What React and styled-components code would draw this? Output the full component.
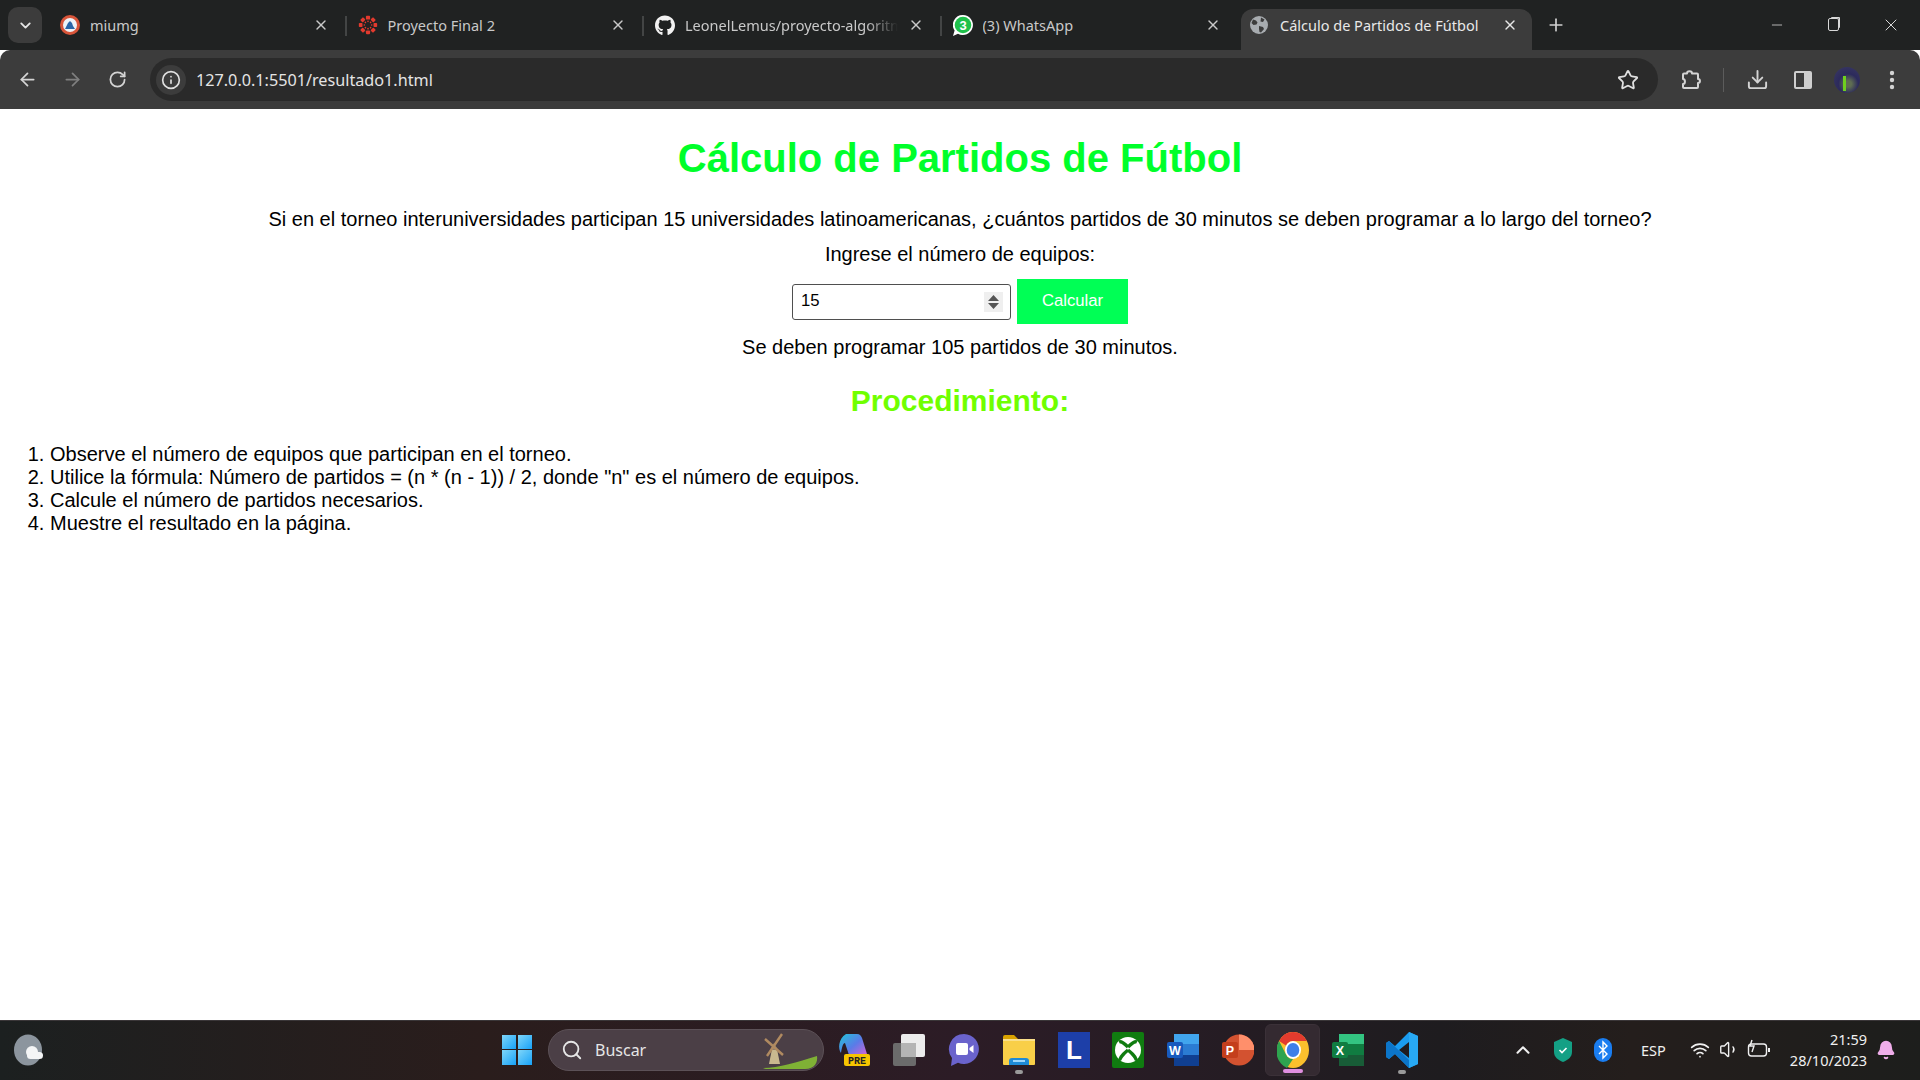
import React from 'react';
import styled, { createGlobalStyle } from 'styled-components';
import { FaGithub } from 'react-icons/fa';
import {
  ArrowLeft, ArrowRight, RotateCw, Info, Star, Download, X, Plus, Minus, ChevronDown, ChevronUp,
  Search, Wifi, Volume1, Bell,
} from 'lucide-react';

const GlobalStyle = createGlobalStyle`
  html, body { margin: 0; padding: 0; height: 100%; background: #fff; }
  * { box-sizing: border-box; }
`;

const Screen = styled.div`
  width: 1920px;
  height: 1080px;
  display: flex;
  flex-direction: column;
  overflow: hidden;
  font-family: "Liberation Sans", Arial, sans-serif;
`;

/* browser chrome */
const TabStrip = styled.div`
  height: 50px;
  flex: none;
  background: #202222;
  display: flex;
  align-items: flex-end;
  padding-left: 8px;
`;

const TabSearch = styled.div`
  width: 34px;
  height: 36px;
  margin: 0 8px 7px 0;
  border-radius: 10px;
  background: #3c3c3c;
  color: #e6e6e6;
  display: flex;
  align-items: center;
  justify-content: center;
`;

const Tab = styled.div`
  width: ${p => (p.$active ? 291 : 297.5)}px;
  height: 41px;
  padding: ${p => (p.$active ? '0 14px 9px 8px' : '0 19px 9px 10px')};
  margin-left: ${p => (p.$active ? '1px' : '0')};
  display: flex;
  align-items: center;
  gap: ${p => (p.$active ? 11 : 10)}px;
  position: relative;
  background: ${p => (p.$active ? '#3c3c3c' : 'transparent')};
  border-radius: ${p => (p.$active ? '12px 12px 0 0' : '0')};
  color: ${p => (p.$active ? '#e8e8e8' : '#c9c9c9')};
  font: 14.5px "Noto Sans", "Open Sans", sans-serif;
  & + &::before {
    content: '';
    display: ${p => (p.$noSep ? 'none' : 'block')};
    position: absolute;
    left: -3px;
    top: 7px;
    width: 2px;
    height: 20px;
    background: #434545;
  }
`;

const TabTitle = styled.span`
  flex: 1;
  min-width: 0;
  white-space: nowrap;
  overflow: hidden;
  ${p => p.$fade && `
    -webkit-mask-image: linear-gradient(90deg, #000 85%, transparent);
    mask-image: linear-gradient(90deg, #000 85%, transparent);
  `}
`;

const TabFavicon = styled.span`
  width: 20px;
  height: 20px;
  flex: none;
  display: flex;
  align-items: center;
  justify-content: center;
`;

const NewTab = styled.div`
  width: 30px;
  height: 30px;
  margin: 0 0 10px 9px;
  color: #d0d0d0;
  display: flex;
  align-items: center;
  justify-content: center;
`;

const WindowButtons = styled.div`
  margin-left: auto;
  height: 100%;
  display: flex;
  align-items: center;
  color: #d8d8d8;
  padding: 0 1px 1px 0;
`;

const WindowButton = styled.div`
  width: 57px;
  height: 100%;
  display: flex;
  align-items: center;
  justify-content: center;
`;

const RestoreGlyph = styled.span`
  width: 11px;
  height: 13px;
  border: 1.3px solid #d8d8d8;
  border-radius: 2px;
  box-shadow: 2px -2px 0 -1px #d8d8d8;
`;

const Toolbar = styled.div`
  height: 59px;
  flex: none;
  background: #3c3c3c;
  border-radius: 10px 10px 0 0;
  display: flex;
  align-items: center;
  padding: 0 6px 0 5px;
  color: #cfcfcf;
`;

const NavButton = styled.div`
  width: 45px;
  height: 38px;
  flex: none;
  display: flex;
  align-items: center;
  justify-content: center;
  color: ${p => (p.$dim ? '#7f7f7f' : '#d4d4d4')};
`;

const Omnibox = styled.div`
  flex: 1;
  height: 43px;
  margin: 0 9px 0 10px;
  padding: 0 19px 0 6px;
  border-radius: 22px;
  background: #2a2a2a;
  display: flex;
  align-items: center;
  color: #e4e4e4;
  font: 16.2px "Noto Sans", "Open Sans", sans-serif;
`;

const SiteInfo = styled.span`
  width: 30px;
  height: 30px;
  margin-right: 10px;
  border-radius: 50%;
  background: #3c3c3c;
  display: flex;
  align-items: center;
  justify-content: center;
  color: #e0e0e0;
`;

const Url = styled.span`
  flex: 1;
`;

const ToolSeparator = styled.span`
  width: 1px;
  height: 24px;
  margin: 0 11px 0 11px;
  background: #5c5c5c;
`;

const ProfileAvatar = styled.span`
  width: 26px;
  height: 26px;
  margin: 0 9px;
  border-radius: 50%;
  background: radial-gradient(circle at 55% 65%, #5f6d52 0 14%, #2c2a5c 45%, #3b3a63 100%);
  position: relative;
  overflow: hidden;
  &::after {
    content: '';
    position: absolute;
    left: 9px;
    top: 9px;
    width: 3px;
    height: 15px;
    background: #6fd01e;
  }
`;

/* page */
const Page = styled.main`
  flex: 1;
  background: #fff;
  color: #000;
  font-size: 20px;
  line-height: 23px;
  padding: 0 10px;
  text-align: center;
`;

const Title = styled.h1`
  margin: 26px 0 27px;
  font-size: 40px;
  line-height: 46px;
  font-weight: 700;
  color: #00ff2a;
`;

const Question = styled.p`
  margin: 0;
`;

const FieldLabel = styled.p`
  margin: 12px 0 0;
`;

const FormRow = styled.form`
  margin-top: 13px;
  display: flex;
  justify-content: center;
  align-items: center;
  gap: 6px;
`;

const NumberBox = styled.div`
  width: 219px;
  height: 36px;
  border: 1px solid #4f4f4f;
  border-radius: 3px;
  background: #fff;
  display: flex;
  align-items: center;
  padding: 0 7px 0 8px;
`;

const NumberInput = styled.input`
  flex: 1;
  min-width: 0;
  border: 0;
  outline: 0;
  padding: 0 0 2px;
  background: transparent;
  font: 16.7px "Liberation Sans", Arial, sans-serif;
  color: #000;
`;

const Spinner = styled.span`
  width: 19px;
  height: 20px;
  background: #efefef;
  display: flex;
  align-items: center;
  justify-content: center;
`;

const SubmitButton = styled.button`
  width: 111px;
  height: 45px;
  border: 0;
  padding: 0 0 2px;
  background: #00ff55;
  color: #fff;
  font: 16.7px "Liberation Sans", Arial, sans-serif;
`;

const Result = styled.p`
  margin: 12px 0 0;
`;

const SectionTitle = styled.h2`
  margin: 25px 0 25px;
  font-size: 30px;
  line-height: 34px;
  font-weight: 700;
  color: #70ff00;
`;

const Steps = styled.ol`
  margin: 0;
  padding: 0 0 0 40px;
  text-align: left;
`;

/* taskbar */
const Taskbar = styled.footer`
  height: 60px;
  flex: none;
  position: relative;
  border-top: 1px solid #3a3638;
  padding-bottom: 2px;
  background: linear-gradient(90deg, #1c2020 0%, #2a1d1c 25%, #2c1c26 50%, #261c24 62%, #1e1c1f 75%, #241e1c 85%, #1d1e1c 100%);
  display: grid;
  grid-template-columns: 502px auto 1fr;
  align-items: center;
`;

const WeatherSlot = styled.div`
  padding-left: 14px;
  display: flex;
  align-items: center;
`;

const CenterIcons = styled.div`
  display: flex;
  align-items: center;
  height: 100%;
`;

const WindowsLogo = styled.div`
  width: 30px;
  height: 30px;
  margin-right: 16px;
  display: grid;
  grid-template-columns: 1fr 1fr;
  gap: 1.5px;
`;

const WindowsPane = styled.span`
  background: linear-gradient(135deg, #7fd6f9, #17a2f8);
`;

const SearchPill = styled.div`
  width: 276px;
  height: 42px;
  margin-right: 3px;
  padding: 0 4px 0 12px;
  border-radius: 21px;
  background: #4b3f46;
  border: 1px solid #5c5157;
  display: flex;
  align-items: center;
  gap: 12px;
  color: #e6e6e6;
  font: 16px "Noto Sans", "Open Sans", sans-serif;
`;

const SearchLabel = styled.span`
  flex: 1;
`;

const TaskSlot = styled.div`
  width: 54.8px;
  height: 52px;
  position: relative;
  display: flex;
  align-items: center;
  justify-content: center;
  border-radius: 6px;
  background: ${p => (p.$active ? '#342a31' : 'transparent')};
  border: ${p => (p.$active ? '1px solid #3b3138' : '0')};
  &::after {
    content: '';
    display: ${p => (p.$dot ? 'block' : 'none')};
    position: absolute;
    bottom: 2px;
    left: 50%;
    transform: translateX(-50%);
    width: ${p => (p.$dot === 'wide' ? 20 : 8)}px;
    height: 4px;
    border-radius: 2px;
    background: ${p => (p.$dot === 'wide' ? '#e08fe0' : '#9a9a9a')};
  }
`;

const Tray = styled.div`
  justify-self: end;
  display: flex;
  align-items: center;
  height: 100%;
  color: #f0f0f0;
  padding-right: 24px;
`;

const TrayItem = styled.span`
  display: flex;
  align-items: center;
  justify-content: center;
  width: ${p => p.$w || 40}px;
  color: ${p => p.$color || 'inherit'};
  font: 14.5px "Noto Sans", "Open Sans", sans-serif;
`;

const Clock = styled.div`
  margin-left: 16px;
  text-align: right;
  font: 14.5px/21px "Noto Sans", "Open Sans", sans-serif;
  color: #f0f0f0;
`;

const BellSlot = styled.span`
  margin-left: 9px;
  display: flex;
  color: #f0aeea;
`;

const CanvasIcon = () => (
  <svg width="22" height="22" viewBox="0 0 24 24">
    <g fill="#e23a2e">
      {[0, 45, 90, 135, 180, 225, 270, 315].map(a => (
        <g key={a} transform={`rotate(${a} 12 12)`}>
          <rect x="9.5" y="1" width="5" height="4.4" rx="1" />
          <circle cx="12" cy="7.6" r="1" />
        </g>
      ))}
    </g>
  </svg>
);

const UmgIcon = () => (
  <svg width="20" height="20" viewBox="0 0 20 20">
    <circle cx="10" cy="10" r="10" fill="#d8553a" />
    <circle cx="10" cy="10" r="7" fill="#eef3f8" />
    <path d="M5 14l3-6 2-2 2 2 1 3 2 3z" fill="#2a66a8" />
  </svg>
);

const GlobeFilled = () => (
  <svg width="18" height="18" viewBox="0 0 18 18">
    <circle cx="9" cy="9" r="9" fill="#a8acb0" />
    <path d="M3 3.5l3 1 1.5 2-1 2L3.5 9 1.5 7zM11 1.5l3.5 2-1.5 2.5-2.5-.5zM9 10l4 1 1 2-3 3.5-1.5-.5-.5-3z" fill="#3c3c3c" />
  </svg>
);

const WhatsappBadge = () => (
  <svg width="20" height="21" viewBox="0 0 20 21">
    <path d="M10 0a10 10 0 1 1-5 18.7L0 21l1.6-5.4A10 10 0 0 1 10 0z" fill="#fff" />
    <circle cx="10" cy="10" r="8.3" fill="#1fc14b" />
    <text x="10" y="14.5" textAnchor="middle" fontSize="13" fontWeight="700" fontFamily="Liberation Sans" fill="#fff">3</text>
  </svg>
);

const PuzzleIcon = () => (
  <svg width="24" height="24" viewBox="0 0 24 24" fill="none" stroke="currentColor" strokeWidth="2" strokeLinejoin="round">
    <path d="M9 5.5c0-3 5-3 5 0h5a1 1 0 0 1 1 1V11c2.6 0 2.6 4 0 4v4a1 1 0 0 1-1 1H6a1 1 0 0 1-1-1v-3c2.6 0 2.6-5 0-5V6.5a1 1 0 0 1 1-1z" />
  </svg>
);

const SidePanelIcon = () => (
  <svg width="22" height="22" viewBox="0 0 22 22">
    <rect x="2" y="2" width="18" height="18" rx="2" fill="#cfcfcf" />
    <rect x="4" y="4" width="8" height="14" fill="#3c3c3c" />
  </svg>
);

const WeatherIcon = () => (
  <svg width="30" height="32" viewBox="0 0 30 32">
    <ellipse cx="14" cy="16" rx="14" ry="15.5" fill="#8c959e" />
    <circle cx="18" cy="18" r="6" fill="#f4f5f6" />
    <rect x="13" y="18" width="16" height="7" rx="3.5" fill="#f4f5f6" />
  </svg>
);

const WindmillIcon = () => (
  <svg width="64" height="40" viewBox="0 0 64 40">
    <path d="M8 38c16 0 34-6 54-12 1 6-2 13-12 13H16c-4 0-7 0-8-1z" fill="#7fb135" />
    <g transform="translate(-8 0)">
      <path d="M22 34l3-15h5l3 15z" fill="#c9b98f" />
      <path d="M23 20l4-7 4 7z" fill="#8a7d70" />
      <path d="M18 9l18 16M35 4L20 26" stroke="#b08a60" strokeWidth="2.4" />
    </g>
  </svg>
);

const CopilotIcon = () => (
  <svg width="32" height="34" viewBox="0 0 32 34">
    <defs>
      <linearGradient id="cop" x1="0" y1="0" x2="1" y2="1">
        <stop offset="0" stopColor="#21c4d8" />
        <stop offset=".5" stopColor="#5a7be8" />
        <stop offset="1" stopColor="#e660d0" />
      </linearGradient>
    </defs>
    <path d="M8 1h11c3 0 4 2 5 4l5 16c1 3-1 4-4 4H12L7 10c-2 0-3 4-4 10C0 16 0 6 8 1z" fill="url(#cop)" />
    <rect x="6" y="21" width="26" height="12" rx="2" fill="#f7c500" />
    <text x="19" y="31" textAnchor="middle" fontSize="10" fontWeight="700" fontFamily="Liberation Mono" fill="#222">PRE</text>
  </svg>
);

const TaskViewIcon = () => (
  <svg width="32" height="32" viewBox="0 0 32 32">
    <rect x="0" y="9" width="23" height="23" rx="2" fill="#6b6b6b" />
    <rect x="8" y="0" width="24" height="23" rx="2" fill="#ececec" />
    <rect x="8" y="9" width="15" height="14" fill="#b4b4b4" />
  </svg>
);

const MeetIcon = () => (
  <svg width="32" height="34" viewBox="0 0 32 34">
    <path d="M16 1a15 15 0 1 1-6 28.8L3 33l1-8A15 15 0 0 1 16 1z" fill="#6a63cc" />
    <rect x="8" y="10" width="12" height="12" rx="2" fill="#fff" />
    <path d="M21.5 15l4-3v8l-4-3z" fill="#fff" />
  </svg>
);

const FolderIcon = () => (
  <svg width="32" height="32" viewBox="0 0 32 32">
    <path d="M0 3a2 2 0 0 1 2-2h9l4 4h-15z" fill="#d9a200" />
    <rect x="0" y="5" width="32" height="26" rx="1" fill="#f9cf48" />
    <rect x="0" y="5" width="32" height="2" fill="#fbe08a" />
    <path d="M6 31v-4a3 3 0 0 1 3-3h14a3 3 0 0 1 3 3v4z" fill="#1e8ad6" />
    <rect x="10" y="26" width="12" height="2" fill="#9bd5fa" />
  </svg>
);

const LetterTile = () => (
  <svg width="32" height="36" viewBox="0 0 32 36">
    <rect width="32" height="36" fill="#1d3fa8" />
    <text x="16" y="27" textAnchor="middle" fontSize="26" fontWeight="700" fontFamily="Liberation Sans" fill="#fff">L</text>
  </svg>
);

const XboxIcon = () => (
  <svg width="32" height="36" viewBox="0 0 32 36">
    <rect width="32" height="36" rx="2" fill="#107c10" />
    <circle cx="16" cy="18" r="13" fill="#fff" />
    <path d="M16 15c-4-4-7-6-9-5M16 15c4-4 7-6 9-5M16 18c-5 4-9 9-8 11M16 18c5 4 9 9 8 11" stroke="#107c10" strokeWidth="3.4" fill="none" />
  </svg>
);

const OfficeTile = ({ letter, dark, mid, light, badge }) => (
  <svg width="32" height="34" viewBox="0 0 32 34">
    <rect x="7" y="1" width="25" height="32" rx="2" fill={mid} />
    <rect x="7" y="1" width="25" height="10" fill={light} />
    <rect x="7" y="22" width="25" height="11" fill={dark} />
    <rect x="0" y="9" width="16" height="16" rx="2" fill={badge} />
    <text x="8" y="21.5" textAnchor="middle" fontSize="12.5" fontWeight="700" fontFamily="Liberation Sans" fill="#fff">{letter}</text>
  </svg>
);

const PowerPointIcon = () => (
  <svg width="32" height="34" viewBox="0 0 32 34">
    <circle cx="17" cy="17" r="15.5" fill="#d35230" />
    <path d="M17 1.5A15.5 15.5 0 0 1 32.5 17H17z" fill="#ff8f6b" />
    <rect x="0" y="9" width="16" height="16" rx="2" fill="#c43e1c" />
    <text x="8" y="21.5" textAnchor="middle" fontSize="12.5" fontWeight="700" fontFamily="Liberation Sans" fill="#fff">P</text>
  </svg>
);

const ChromeIcon = () => (
  <svg width="32" height="36" viewBox="0 0 32 32" preserveAspectRatio="none">
    <circle cx="16" cy="16" r="16" fill="#fbc02d" />
    <path d="M16 0a16 16 0 0 1 13.9 8H16a8 8 0 0 0-7 4L2.1 8A16 16 0 0 1 16 0z" fill="#e33b2e" />
    <path d="M2.1 8L9 20a8 8 0 0 0 7 4l-6 8A16 16 0 0 1 2.1 8z" fill="#2ea44f" />
    <circle cx="16" cy="16" r="8" fill="#fff" />
    <circle cx="16" cy="16" r="6.3" fill="#3f7fe8" />
  </svg>
);

const VsCodeIcon = () => (
  <svg width="32" height="36" viewBox="0 0 32 36">
    <path d="M23 0l9 4v28l-9 4-14-14-6 5-3-2v-14l3-2 6 5zM23 10L13 18l10 8z" fill="#1a9cf0" fillRule="evenodd" />
    <path d="M23 0l9 4v28l-9 4z" fill="#28a9f4" />
    <path d="M0 11l3-2 20 19v8l-14-14-6 5-3-2z" fill="#0a6fc2" opacity=".85" />
  </svg>
);

const ShieldIcon = () => (
  <svg width="18" height="24" viewBox="0 0 18 24">
    <path d="M9 0l9 4v10c0 5-4 8-9 10-5-2-9-5-9-10V4z" fill="#14a085" />
    <path d="M5.5 12l2.5 2.5 4.5-4.5" stroke="#fff" strokeWidth="1.6" fill="none" />
  </svg>
);

const BluetoothIcon = () => (
  <svg width="18" height="24" viewBox="0 0 18 24">
    <rect width="18" height="24" rx="9" fill="#1a7df0" />
    <path d="M5 8l8 8-4 4V4l4 4-8 8" stroke="#fff" strokeWidth="1.4" fill="none" />
  </svg>
);

const BatteryIcon = () => (
  <svg width="24" height="22" viewBox="0 0 24 22" fill="none" stroke="#f0f0f0" strokeWidth="1.4">
    <rect x="1.5" y="5" width="18" height="12" rx="3" />
    <path d="M22 9v4" strokeWidth="2" />
    <path d="M5 1L3 7h4l-2 6" />
  </svg>
);

const tabs = [
  { title: 'miumg', icon: <UmgIcon /> },
  { title: 'Proyecto Final 2', icon: <CanvasIcon /> },
  { title: 'LeonelLemus/proyecto-algoritmos', icon: <FaGithub size={21} color="#f2f2f2" />, fade: true },
  { title: '(3) WhatsApp', icon: <WhatsappBadge /> },
];

const steps = [
  'Observe el número de equipos que participan en el torneo.',
  'Utilice la fórmula: Número de partidos = (n * (n - 1)) / 2, donde "n" es el número de equipos.',
  'Calcule el número de partidos necesarios.',
  'Muestre el resultado en la página.',
];

const App = () => {
  return (
    <Screen>
      <GlobalStyle />
      <TabStrip>
        <TabSearch><ChevronDown size={17} strokeWidth={2.6} /></TabSearch>
        {tabs.map(tab => (
          <Tab key={tab.title}>
            <TabFavicon>{tab.icon}</TabFavicon>
            <TabTitle $fade={tab.fade}>{tab.title}</TabTitle>
            <X size={16} strokeWidth={2} />
          </Tab>
        ))}
        <Tab $active $noSep>
          <TabFavicon><GlobeFilled /></TabFavicon>
          <TabTitle>Cálculo de Partidos de Fútbol</TabTitle>
          <X size={16} strokeWidth={2} />
        </Tab>
        <NewTab><Plus size={20} /></NewTab>
        <WindowButtons>
          <WindowButton><Minus size={16} strokeWidth={1.2} /></WindowButton>
          <WindowButton><RestoreGlyph /></WindowButton>
          <WindowButton><X size={20} strokeWidth={1.2} /></WindowButton>
        </WindowButtons>
      </TabStrip>

      <Toolbar>
        <NavButton><ArrowLeft size={21} /></NavButton>
        <NavButton $dim><ArrowRight size={21} /></NavButton>
        <NavButton><RotateCw size={19} strokeWidth={2.2} /></NavButton>
        <Omnibox>
          <SiteInfo><Info size={20} /></SiteInfo>
          <Url>127.0.0.1:5501/resultado1.html</Url>
          <Star size={22} strokeWidth={2} color="#e0e0e0" />
        </Omnibox>
        <NavButton><PuzzleIcon /></NavButton>
        <ToolSeparator />
        <NavButton><Download size={23} /></NavButton>
        <NavButton><SidePanelIcon /></NavButton>
        <ProfileAvatar />
        <NavButton><svg width="6" height="20" viewBox="0 0 6 20" fill="#d4d4d4"><circle cx="3" cy="3" r="2.2" /><circle cx="3" cy="10" r="2.2" /><circle cx="3" cy="17" r="2.2" /></svg></NavButton>
      </Toolbar>

      <Page>
        <Title>Cálculo de Partidos de Fútbol</Title>
        <Question>Si en el torneo interuniversidades participan 15 universidades latinoamericanas, ¿cuántos partidos de 30 minutos se deben programar a lo largo del torneo?</Question>
        <FieldLabel>Ingrese el número de equipos:</FieldLabel>
        <FormRow onSubmit={e => e.preventDefault()}>
          <NumberBox>
            <NumberInput type="text" defaultValue="15" />
            <Spinner>
              <svg width="11" height="14" viewBox="0 0 11 14" fill="#555"><path d="M5.5 0L11 6H0zM0 8h11l-5.5 6z" /></svg>
            </Spinner>
          </NumberBox>
          <SubmitButton type="submit">Calcular</SubmitButton>
        </FormRow>
        <Result>Se deben programar 105 partidos de 30 minutos.</Result>
        <SectionTitle>Procedimiento:</SectionTitle>
        <Steps>
          {steps.map(step => <li key={step}>{step}</li>)}
        </Steps>
      </Page>

      <Taskbar>
        <WeatherSlot><WeatherIcon /></WeatherSlot>
        <CenterIcons>
          <WindowsLogo>
            <WindowsPane /><WindowsPane /><WindowsPane /><WindowsPane />
          </WindowsLogo>
          <SearchPill>
            <Search size={22} />
            <SearchLabel>Buscar</SearchLabel>
            <WindmillIcon />
          </SearchPill>
          <TaskSlot><CopilotIcon /></TaskSlot>
          <TaskSlot><TaskViewIcon /></TaskSlot>
          <TaskSlot><MeetIcon /></TaskSlot>
          <TaskSlot $dot><FolderIcon /></TaskSlot>
          <TaskSlot><LetterTile /></TaskSlot>
          <TaskSlot><XboxIcon /></TaskSlot>
          <TaskSlot><OfficeTile letter="W" dark="#103f91" mid="#2b7cd3" light="#41a5ee" badge="#185abd" /></TaskSlot>
          <TaskSlot><PowerPointIcon /></TaskSlot>
          <TaskSlot $active $dot="wide"><ChromeIcon /></TaskSlot>
          <TaskSlot><OfficeTile letter="X" dark="#185c37" mid="#107c41" light="#33c481" badge="#107c41" /></TaskSlot>
          <TaskSlot $dot><VsCodeIcon /></TaskSlot>
        </CenterIcons>
        <Tray>
          <TrayItem><ChevronUp size={22} strokeWidth={2.2} /></TrayItem>
          <TrayItem><ShieldIcon /></TrayItem>
          <TrayItem><BluetoothIcon /></TrayItem>
          <TrayItem $w={61}>ESP</TrayItem>
          <TrayItem $w={32}><Wifi size={20} /></TrayItem>
          <TrayItem $w={28}><Volume1 size={21} strokeWidth={1.6} /></TrayItem>
          <TrayItem $w={30}><BatteryIcon /></TrayItem>
          <Clock><div>21:59</div><div>28/10/2023</div></Clock>
          <BellSlot><Bell size={20} fill="currentColor" /></BellSlot>
        </Tray>
      </Taskbar>
    </Screen>
  );
};

export default App;
